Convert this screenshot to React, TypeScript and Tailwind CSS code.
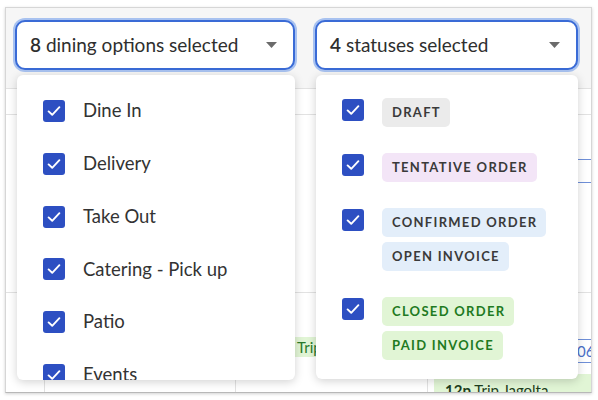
import React from 'react'

const diningOptions = ['Dine In', 'Delivery', 'Take Out', 'Catering - Pick up', 'Patio', 'Events']

type Badge = { label: string; tone: 'gray' | 'purple' | 'blue' | 'green' }

const statusGroups: Badge[][] = [
  [{ label: 'DRAFT', tone: 'gray' }],
  [{ label: 'TENTATIVE ORDER', tone: 'purple' }],
  [
    { label: 'CONFIRMED ORDER', tone: 'blue' },
    { label: 'OPEN INVOICE', tone: 'blue' },
  ],
  [
    { label: 'CLOSED ORDER', tone: 'green' },
    { label: 'PAID INVOICE', tone: 'green' },
  ],
]

const toneClass: Record<Badge['tone'], string> = {
  gray: 'bg-[#ebebeb] text-[#3a3a3a]',
  purple: 'bg-[#f3e5f7] text-[#3a3a3a]',
  blue: 'bg-[#e3eefa] text-[#3a3a3a]',
  green: 'bg-[#e1f5d5] text-[#1f7a22]',
}

function Checkbox() {
  return (
    <span className="flex h-[22px] w-[22px] shrink-0 items-center justify-center rounded-[3px] bg-[#2d4fc2]">
      <svg width="16" height="16" viewBox="0 0 16 16" fill="none">
        <path d="M2.6 8.4 6.2 11.8 13.4 4.2" stroke="white" strokeWidth="1.9" strokeLinecap="round" strokeLinejoin="round" />
      </svg>
    </span>
  )
}

function Caret() {
  return (
    <svg width="11" height="6" viewBox="0 0 11 6" className="shrink-0">
      <path d="M0 0h11L5.5 6z" fill="#6b6b6b" />
    </svg>
  )
}

function SelectBox({ count, label, width }: { count: string; label: string; width: string }) {
  return (
    <div
      className={`${width} flex h-[50px] items-center justify-between rounded-[10px] border-2 border-[#3a6bd6] bg-white pl-[13px] pr-[16px] ring-2 ring-[#a8c2f0]`}
    >
      <span className="text-[19px] text-[#2e2e2e]">
        <span className="font-semibold">{count}</span> {label}
      </span>
      <Caret />
    </div>
  )
}

export default function App() {
  return (
    <div className="relative h-[400px] w-[598px] overflow-hidden bg-white font-['Lato',sans-serif]">
      {/* background card with calendar */}
      <div className="ml-[5px] mt-[7px] flex h-[386px] w-[587px] flex-col overflow-hidden border border-[#d6d6d6] border-b-[#b8b8b8] bg-white shadow-[0_1px_3px_rgba(0,0,0,0.18)]">
        <div className="flex h-[81px] shrink-0 gap-[20px] border-b border-[#e2e2e2] bg-[#f6f6f6] pl-[9px] pt-[12px]">
          <SelectBox count="8" label="dining options selected" width="w-[280px]" />
          <SelectBox count="4" label="statuses selected" width="w-[263px]" />
        </div>
        <div className="grid h-[26px] shrink-0 grid-cols-[39px_191px_192px_1fr] border-b border-[#e2e2e2]">
          <div className="border-r border-[#e2e2e2]" />
          <div className="border-r border-[#e2e2e2]" />
          <div className="border-r border-[#e2e2e2]" />
          <div />
        </div>
        <div className="grid h-[178px] shrink-0 grid-cols-[39px_191px_192px_1fr] border-b border-[#e2e2e2]">
          <div className="border-r border-[#e2e2e2]" />
          <div className="border-r border-[#e2e2e2]" />
          <div className="border-r border-[#e2e2e2]" />
          <div className="pt-[44px] pl-[6px]">
            <div className="h-[24px] border-y border-[#6f8fd8]" />
          </div>
        </div>
        <div className="grid flex-1 grid-cols-[39px_191px_192px_1fr]">
          <div className="border-r border-[#e2e2e2]" />
          <div className="border-r border-[#e2e2e2]" />
          <div className="border-r border-[#e2e2e2] pt-[44px]">
            <div className="ml-[59px] h-[20px] overflow-hidden whitespace-nowrap bg-[#e1f5d5] pl-[2px] text-[15px] leading-[20px] text-[#2a7a2a]">
              Trip Jagolta
            </div>
          </div>
          <div className="flex flex-col pl-[6px] pt-[46px]">
            <div className="h-[24px] overflow-hidden whitespace-nowrap border-y border-[#6f8fd8] pl-[143px] text-[15px] leading-[22px] text-[#4b6fc8]">
              06-14
            </div>
            <div className="mt-[11px] h-[22px] overflow-hidden whitespace-nowrap bg-[#e1f5d5] pl-[11px] pt-[6px] text-[15px] leading-[20px] text-[#1e3e1e]">
              <span className="font-bold">12p</span> Trip Jagolta
            </div>
          </div>
        </div>
      </div>

      {/* dining options menu */}
      <div className="absolute left-[17px] top-[75px] h-[305px] w-[278px] overflow-hidden rounded-[6px] bg-white pt-[9.6px] shadow-[0_2px_10px_rgba(0,0,0,0.18)]">
        {diningOptions.map((opt) => (
          <div key={opt} className="flex h-[52.8px] items-center gap-[18px] pl-[26px]">
            <Checkbox />
            <span className="text-[18.5px] text-[#333]">{opt}</span>
          </div>
        ))}
      </div>

      {/* status menu */}
      <div className="absolute left-[316px] top-[75px] h-[304px] w-[262px] overflow-hidden rounded-[6px] bg-white pt-[10px] shadow-[0_2px_10px_rgba(0,0,0,0.18)]">
        {statusGroups.map((group, i) => (
          <div key={i} className="flex items-start gap-[18px] py-[13px] pl-[26px]">
            <div className="pt-[1px]">
              <Checkbox />
            </div>
            <div className="flex flex-col items-start gap-[5px]">
              {group.map((b) => (
                <span
                  key={b.label}
                  className={`${toneClass[b.tone]} flex h-[29px] items-center rounded-[5px] pl-[10px] pr-[9px] text-[13px] font-bold tracking-[1.3px]`}
                >
                  {b.label}
                </span>
              ))}
            </div>
          </div>
        ))}
      </div>
    </div>
  )
}
